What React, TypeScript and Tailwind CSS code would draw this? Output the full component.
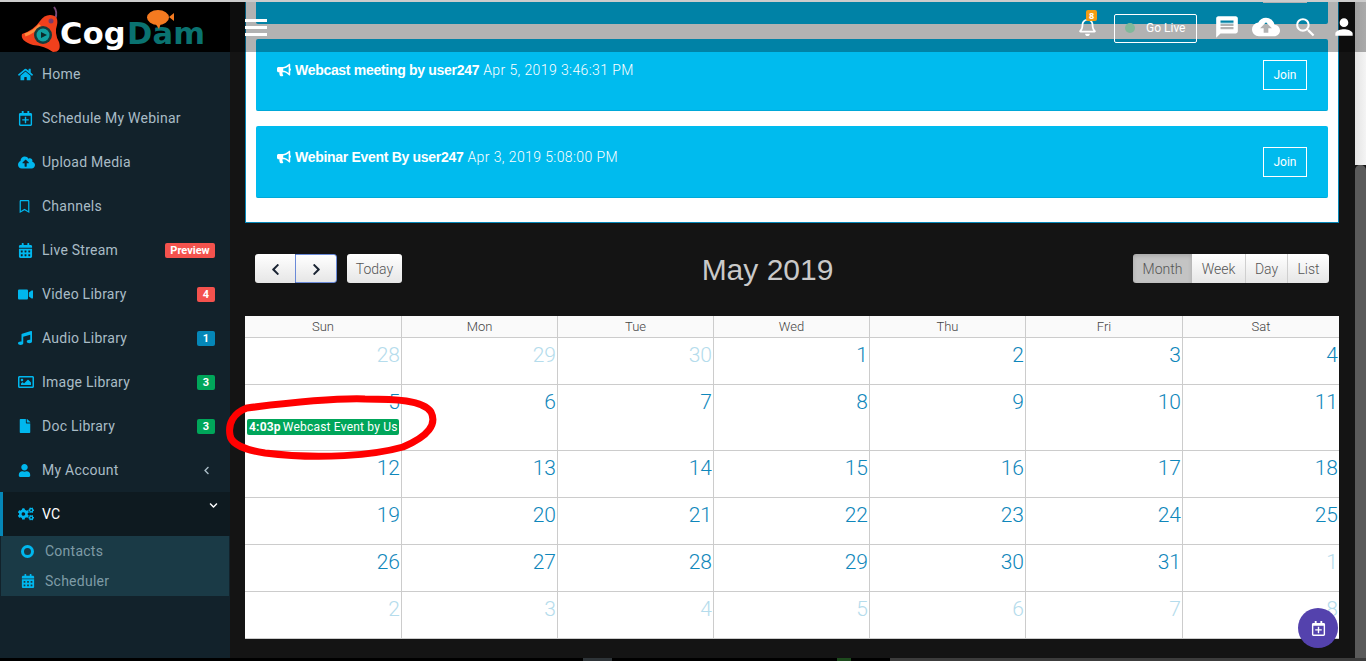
import type { ReactNode } from "react";
import {
  FaBullhorn,
  FaCalendarAlt,
  FaChevronDown,
  FaChevronLeft,
  FaChevronRight,
  FaCloudUploadAlt,
  FaCogs,
  FaFile,
  FaHome,
  FaMusic,
  FaRegBell,
  FaRegBookmark,
  FaRegCalendarPlus,
  FaRegImage,
  FaUser,
  FaVideo,
} from "react-icons/fa";
import { MdCloudUpload, MdMessage, MdPerson, MdSearch } from "react-icons/md";

interface NavItem {
  label: string;
  icon: ReactNode;
  badge?: string;
  badgeClass?: string;
}

const navItems: NavItem[] = [
  { label: "Home", icon: <FaHome size={15} /> },
  { label: "Schedule My Webinar", icon: <FaRegCalendarPlus size={15} /> },
  { label: "Upload Media", icon: <FaCloudUploadAlt size={17} /> },
  { label: "Channels", icon: <FaRegBookmark size={13} /> },
  { label: "Live Stream", icon: <FaCalendarAlt size={15} />, badge: "Preview", badgeClass: "w-[50px] bg-[#f4524d]" },
  { label: "Video Library", icon: <FaVideo size={15} />, badge: "4", badgeClass: "w-[18px] bg-[#f4524d]" },
  { label: "Audio Library", icon: <FaMusic size={14} />, badge: "1", badgeClass: "w-[18px] bg-[#0587b8]" },
  { label: "Image Library", icon: <FaRegImage size={16} />, badge: "3", badgeClass: "w-[18px] bg-[#00a65a]" },
  { label: "Doc Library", icon: <FaFile size={14} />, badge: "3", badgeClass: "w-[18px] bg-[#00a65a]" },
];

const weekdays = ["Sun", "Mon", "Tue", "Wed", "Thu", "Fri", "Sat"];

// day number + whether it belongs to May
const weeks: { days: [number, boolean][]; height: string }[] = [
  { height: "h-[47px]", days: [[28, false], [29, false], [30, false], [1, true], [2, true], [3, true], [4, true]] },
  { height: "h-[66px]", days: [[5, true], [6, true], [7, true], [8, true], [9, true], [10, true], [11, true]] },
  { height: "h-[47px]", days: [[12, true], [13, true], [14, true], [15, true], [16, true], [17, true], [18, true]] },
  { height: "h-[47px]", days: [[19, true], [20, true], [21, true], [22, true], [23, true], [24, true], [25, true]] },
  { height: "h-[47px]", days: [[26, true], [27, true], [28, true], [29, true], [30, true], [31, true], [1, false]] },
  { height: "h-[47px]", days: [[2, false], [3, false], [4, false], [5, false], [6, false], [7, false], [8, false]] },
];

function Logo() {
  return (
    <div className="relative flex h-[50px] items-end bg-black pl-[60px] font-['DejaVu_Sans',sans-serif] text-[30.5px] leading-[36px] font-bold">
      <svg className="absolute left-[20px] top-[4px]" width="44" height="46" viewBox="0 0 44 46">
        <path d="M34 1 Q38 6 35 13" fill="none" stroke="#7a4a7a" strokeWidth="2" />
        <path
          d="M30 9 Q39 9 37 19 Q34 27 39 36 Q42 46 33 46 Q25 40 13 39 Q0 35 2 28 Q14 24 20 15 Q24 9 30 9Z"
          fill="#f0401c"
        />
        <path d="M5 29 Q14 26 20 19" fill="none" stroke="#ff8a3c" strokeWidth="3" />
        <circle cx="31" cy="15" r="2.5" fill="#7a3a6a" />
        <circle cx="23" cy="29" r="9" fill="#143c3c" />
        <circle cx="23" cy="29" r="6.5" fill="#12a0a0" />
        <path d="M21 26 L27 29 L21 32Z" fill="#0b2a2a" />
      </svg>
      <span className="text-white">Cog</span>
      <span className="ml-[1px] text-[#0a7270]">Dam</span>
      <svg className="absolute left-[146px] top-[8px]" width="30" height="20" viewBox="0 0 30 20">
        <ellipse cx="12" cy="7.5" rx="11" ry="7.5" fill="#f47a20" />
        <path d="M9 13 L13 19 L15 13Z" fill="#f47a20" />
        <path d="M23 7 L28 3 L28 11Z" fill="#f47a20" />
      </svg>
    </div>
  );
}

function Sidebar() {
  return (
    <aside className="flex w-[230px] shrink-0 flex-col bg-[#12222b] font-['Roboto',sans-serif] text-[14px] tracking-[0.25px] text-[#a9bcc6]">
      <Logo />
      {navItems.map((item) => (
        <div key={item.label} className="flex h-[44px] items-center pl-[18px] pr-[15px]">
          <span className="flex w-[24px] text-[#00b7ee]">{item.icon}</span>
          <span className="flex-1">{item.label}</span>
          {item.badge && (
            <span
              className={`flex h-[15px] items-center justify-center rounded-[2px] text-[11px] leading-none font-bold tracking-normal text-white ${item.badgeClass}`}>
              {item.badge}
            </span>
          )}
        </div>
      ))}
      <div className="flex h-[44px] items-center pl-[18px] pr-[19px]">
        <span className="flex w-[24px] text-[#00b7ee]">
          <FaUser size={13} />
        </span>
        <span className="flex-1">My Account</span>
        <FaChevronLeft size={9} />
      </div>
      <div className="relative flex h-[44px] items-center border-l-[3px] border-[#0587b8] bg-[#0e1a20] pl-[15px] text-white">
        <span className="flex w-[24px] text-[#00b7ee]">
          <FaCogs size={16} />
        </span>
        <span>VC</span>
        <FaChevronDown size={9} className="absolute right-[12px] top-[9px]" />
      </div>
      <div className="mx-[1px] bg-[#1a3a46] text-[#7f9ca6]">
        <div className="flex h-[30px] items-center pl-[20px]">
          <span className="flex w-[24px]">
            <span className="h-[13px] w-[13px] rounded-full border-[3px] border-[#00b7ee]" />
          </span>
          Contacts
        </div>
        <div className="flex h-[30px] items-center pl-[20px]">
          <span className="flex w-[24px] text-[#00b7ee]">
            <FaCalendarAlt size={14} />
          </span>
          Scheduler
        </div>
      </div>
    </aside>
  );
}

function WebinarCard({ title, date }: { title: string; date: string }) {
  return (
    <div className="mt-[15px] flex h-[72px] items-start justify-between rounded-[2px] border-b border-[#00a8d8] bg-[#00bbee] pl-[21px] pr-[21px] text-white">
      <p className="mt-[22px] flex items-center font-['Roboto',sans-serif] text-[14px] leading-[18px] font-light tracking-[0.4px]">
        <FaBullhorn size={14} className="mr-[4px]" />
        <b className="mr-[4px] font-['Liberation_Sans',sans-serif] font-bold tracking-[-0.3px]">{title}</b>
        {date}
      </p>
      <button className="mt-[21px] h-[30px] w-[44px] border border-white font-['Roboto',sans-serif] text-[12px] font-normal text-white">
        Join
      </button>
    </div>
  );
}

function Toolbar() {
  const btn = "flex h-[29px] items-center justify-center bg-gradient-to-b from-white to-[#e6e6e6] pt-[1px] text-[#555]";
  return (
    <div className="mt-[31px] flex h-[29px] items-center justify-between pl-[10px] pr-[10px] font-['Roboto',sans-serif] text-[14px] font-light">
      <div className="flex">
        <button className={`${btn} w-[40px] rounded-l-[3px]`}>
          <FaChevronLeft size={13} className="text-[#1a2433]" />
        </button>
        <button className={`${btn} w-[42px] rounded-r-[3px] border border-[#6a8ad8]`}>
          <FaChevronRight size={13} className="text-[#1a2433]" />
        </button>
        <button className={`${btn} ml-[10px] w-[55px] rounded-[3px]`}>Today</button>
      </div>
      <h2 className="pt-[2px] font-['Liberation_Sans',sans-serif] text-[30px] leading-none font-normal text-[#c9c9c9]">
        May 2019
      </h2>
      <div className="flex text-[#555]">
        <button className="flex h-[29px] w-[59px] items-center justify-center rounded-l-[3px] bg-[#c4c4c4] pt-[1px] shadow-[inset_0_2px_4px_rgba(0,0,0,0.15)]">
          Month
        </button>
        <button className={`${btn} w-[54px] border-r border-[#cfcfcf]`}>Week</button>
        <button className={`${btn} w-[42px] border-r border-[#cfcfcf]`}>Day</button>
        <button className={`${btn} w-[41px] rounded-r-[3px]`}>List</button>
      </div>
    </div>
  );
}

function Calendar() {
  return (
    <div className="mt-[33px] bg-white font-['Roboto',sans-serif]">
      <div className="grid h-[22px] grid-cols-[157px_156px_156px_156px_156px_157px_1fr] border-b border-[#ccc] bg-[#fafafa]">
        {weekdays.map((d, i) => (
          <div
            key={d}
            className={`flex items-center justify-center pt-[1px] text-[13px] font-light text-[#444] ${i < 6 ? "border-r border-[#ccc]" : ""}`}>
            {d}
          </div>
        ))}
      </div>
      {weeks.map((week, w) => (
        <div
          key={w}
          className={`grid grid-cols-[157px_156px_156px_156px_156px_157px_1fr] border-b border-[#ccc] ${week.height}`}>
          {week.days.map(([day, current], i) => (
            <div
              key={i}
              className={`pr-[1px] pt-[4px] text-right text-[21px] leading-[26px] font-light ${
                current ? "text-[#0f87bb]" : "text-[#b5dcec]"
              } ${i < 6 ? "border-r border-[#ccc]" : ""}`}>
              {day}
              {w === 1 && i === 0 && (
                <div className="mt-[4px] ml-[2px] mr-[1px] flex h-[16px] items-center overflow-hidden rounded-[2px] bg-[#00a65a] pl-[2px] text-left text-[12px] leading-none font-normal tracking-[0.2px] whitespace-nowrap text-white">
                  <b className="mr-[2px] font-bold">4:03p</b>
                  Webcast Event by Us
                </div>
              )}
            </div>
          ))}
        </div>
      ))}
    </div>
  );
}

function TopBar() {
  return (
    <header className="absolute left-[230px] right-0 top-[2px] flex h-[50px] items-center bg-black/30 pl-[15px] text-white">
      <div className="flex w-[22px] flex-col gap-[4px]">
        <span className="h-[3px] bg-white" />
        <span className="h-[3px] bg-white" />
        <span className="h-[3px] bg-white" />
      </div>
      <div className="relative ml-[811px] mb-[2px]">
        <FaRegBell size={19} />
        <span className="absolute -top-[7px] left-[8px] flex h-[11px] w-[11px] items-center justify-center rounded-[2px] bg-[#f39c12] text-[9px] leading-none font-bold">
          8
        </span>
      </div>
      <div className="ml-[17px] mb-[-2px] flex h-[29px] w-[83px] items-center rounded-[2px] border border-white pl-[10px] font-['Roboto',sans-serif] text-[12px]">
        <span className="mr-[11px] h-[10px] w-[10px] rounded-full bg-[#7fb89a]" />
        Go Live
      </div>
      <MdMessage size={26} className="ml-[17px]" />
      <MdCloudUpload size={28} className="ml-[12px]" />
      <MdSearch size={25} className="ml-[13px]" />
      <MdPerson size={26} className="ml-[13px]" />
    </header>
  );
}

export default function App() {
  return (
    <div className="relative flex h-[661px] w-[1366px] flex-col overflow-hidden bg-black">
      <div className="h-[2px] bg-[#ccc]" />
      <div className="flex min-h-0 flex-1">
        <Sidebar />
        <main className="flex-1 bg-[#141414] pl-[15px] pr-[16px]">
          <section className="h-[221px] border-x border-b border-[#0587b8] bg-white px-[10px]">
            <div className="flex h-[22px] items-start justify-end rounded-b-[2px] bg-[#00bbee] pr-[21px]">
              <div className="h-px w-[44px] bg-white" />
            </div>
            <WebinarCard title="Webcast meeting by user247" date="Apr 5, 2019 3:46:31 PM" />
            <WebinarCard title="Webinar Event By user247" date="Apr 3, 2019 5:08:00 PM" />
          </section>
          <Toolbar />
          <Calendar />
        </main>
        <div className="flex w-[11px] flex-col bg-[#141414]">
          <div className="h-[163px] bg-gradient-to-r from-[#e4e4e4] to-[#f4f4f4]" />
          <div className="flex-1 rounded-t-[5px] bg-[#5a5a5a]" />
        </div>
      </div>
      <div className="flex h-[3px] bg-black">
        <div className="ml-[583px] w-[29px] bg-[#2e3438]" />
        <div className="ml-[225px] w-[14px] bg-[#1d4a1d]" />
        <div className="ml-[39px] flex-1 bg-[#3c3c3c]" />
      </div>
      <TopBar />
      <svg className="absolute left-[225px] top-[392px]" width="215" height="72" viewBox="0 0 215 72">
        <path
          d="M22 16 C70 10 110 6 140 7 C170 7 198 8 206 20 C212 32 204 44 178 55 C150 63 95 68 40 61 C20 58 6 52 5 43 C3 32 8 21 22 16"
          fill="none"
          stroke="#ff0000"
          strokeWidth="7"
          strokeLinecap="round"
        />
      </svg>
      <button className="absolute left-[1298px] top-[608px] flex h-[40px] w-[40px] items-center justify-center rounded-full bg-[#5442ad] text-white">
        <FaRegCalendarPlus size={15} />
      </button>
    </div>
  );
}
